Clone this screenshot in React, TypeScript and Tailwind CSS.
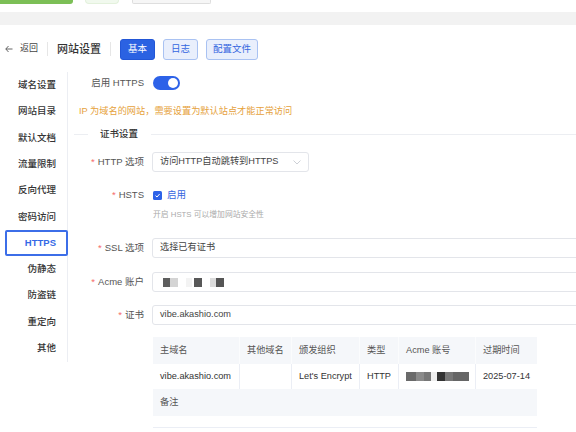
const navItems = [
  "域名设置",
  "网站目录",
  "默认文档",
  "流量限制",
  "反向代理",
  "密码访问",
  "HTTPS",
  "伪静态",
  "防盗链",
  "重定向",
  "其他",
];

const columns = [
  { title: "主域名", width: "w-[86px]" },
  { title: "其他域名", width: "w-[52px]" },
  { title: "颁发组织", width: "w-[68px]" },
  { title: "类型", width: "w-[39px]" },
  { title: "Acme 账号", width: "w-[77px]" },
  { title: "过期时间", width: "w-[62px]" },
];

const Label = ({ text, required }: { text: string; required?: boolean }) => (
  <div className="w-[76px] shrink-0 text-right text-[9.5px] text-[#555]">
    {required && <span className="mr-[3px] text-[#f56c6c]">*</span>}
    {text}
  </div>
);

const Blur = ({ blocks }: { blocks: { w: string; c: string }[] }) => (
  <div className="flex h-[9px]">
    {blocks.map((b, i) => (
      <div key={i} className={`${b.w} ${b.c} h-full`} />
    ))}
  </div>
);

const Sidebar = () => (
  <div className="h-[290px] w-[68px] shrink-0 border-r border-[#eceef3]">
    {navItems.map((item) => {
      const active = item === "HTTPS";
      return (
        <div
          key={item}
          className={
            active
              ? "ml-[5px] flex h-[26.3px] w-[63px] items-center justify-end rounded-[2px] border-2 border-[#3c6ee8] pr-[10px] text-[9.5px] font-bold text-[#3468e6]"
              : "ml-[5px] flex h-[26.3px] w-[63px] items-center justify-end pr-[12px] text-[9.5px] font-medium text-[#333]"
          }
        >
          {item}
        </div>
      );
    })}
  </div>
);

const CertTable = () => (
  <div className="ml-[85px] mt-[12px] w-[384px] border-b border-[#ebeef5] text-[9.2px]">
    <div className="flex h-[27px] bg-[#f5f7fa] text-[#555]">
      {columns.map((c, i) => (
        <div
          key={c.title}
          className={`${c.width} flex items-center px-[7px] ${i > 0 ? "border-l border-[#fbfcfd]" : ""}`}
        >
          {c.title}
        </div>
      ))}
    </div>
    <div className="flex h-[25px] text-[#333]">
      <div className="flex w-[86px] items-center px-[7px]">vibe.akashio.com</div>
      <div className="w-[52px] border-l border-[#ebeef5]" />
      <div className="flex w-[68px] items-center border-l border-[#ebeef5] px-[7px]">Let's Encrypt</div>
      <div className="flex w-[39px] items-center border-l border-[#ebeef5] px-[7px]">HTTP</div>
      <div className="flex w-[77px] items-center border-l border-[#ebeef5] px-[7px]">
        <Blur
          blocks={[
            { w: "w-[10px]", c: "bg-[#6a6a6a]" },
            { w: "w-[8px]", c: "bg-[#8a8a8a]" },
            { w: "w-[7px]", c: "bg-[#777]" },
            { w: "w-[6px]", c: "bg-[#eeeeee]" },
            { w: "w-[8px]", c: "bg-[#333]" },
            { w: "w-[8px]", c: "bg-[#777]" },
            { w: "w-[16px]", c: "bg-[#666]" },
          ]}
        />
      </div>
      <div className="flex w-[62px] items-center border-l border-[#ebeef5] px-[7px]">2025-07-14</div>
    </div>
    <div className="flex h-[27px] items-center bg-[#f5f7fa] px-[7px] text-[#555]">备注</div>
    <div className="h-[11px]" />
  </div>
);

const App = () => {
  return (
    <div
      className="h-[432px] w-[576px] overflow-hidden bg-white"
      style={{ fontFamily: '"Liberation Sans", "Noto Sans CJK SC", sans-serif' }}
    >
      {/* tail of the block above */}
      <div className="flex h-[4px]">
        <div className="w-[73px] rounded-br-[3px] bg-[#7cbf56]" />
        <div className="ml-[12px] w-[34px] rounded-b-[8px] border border-t-0 border-[#e3f1dc] bg-[#f1f9ee]" />
        <div className="ml-[13px] w-[79px] rounded-b-[2px] border border-t-0 border-[#dedede] bg-[#f6f6f6]" />
      </div>
      <div className="mt-[8px] h-[13px] bg-[#f2f2f2]" />

      {/* header */}
      <div className="mt-[13px] flex h-[22px] items-center pl-[5px]">
        <svg width="8" height="8" viewBox="0 0 8 8" fill="none">
          <path d="M0.8 4H7.5M3.5 1L0.8 4L3.5 7" stroke="#555" strokeWidth="0.9" />
        </svg>
        <span className="ml-[7px] text-[9px] text-[#444]">返回</span>
        <div className="ml-[9px] h-[14px] w-px bg-[#e6e6e6]" />
        <span className="ml-[9px] text-[11px] font-medium text-[#333]">网站设置</span>
        <div className="ml-[9px] h-[14px] w-px bg-[#e6e6e6]" />
        <button className="ml-[9px] flex h-[21px] w-[35px] items-center justify-center rounded-[3px] border border-[#2256d6] bg-[#2b62e2] text-[9.5px] text-white">
          基本
        </button>
        <button className="ml-[8px] flex h-[21px] w-[35px] items-center justify-center rounded-[3px] border border-[#a9c2f2] bg-[#e9effc] text-[9.5px] text-[#3466e0]">
          日志
        </button>
        <button className="ml-[8px] flex h-[21px] w-[52px] items-center justify-center rounded-[3px] border border-[#a9c2f2] bg-[#e9effc] text-[9.5px] text-[#3466e0]">
          配置文件
        </button>
      </div>

      {/* body */}
      <div className="mt-[12px] flex">
        <Sidebar />
        <div className="flex flex-1 flex-col">
          <div className="flex h-[22px] items-center">
            <Label text="启用 HTTPS" />
            <div className="ml-[9px] flex h-[14px] w-[27px] items-center justify-end rounded-full bg-[#2d62e8] pr-[2px]">
              <div className="h-[10px] w-[10px] rounded-full bg-white" />
            </div>
          </div>

          <div className="ml-[11px] mt-[9px] flex h-[17px] items-center text-[9.2px] text-[#e6a23c]">
            IP 为域名的网站，需要设置为默认站点才能正常访问
          </div>

          <div className="mt-[7px] flex h-[14px] items-center pl-[6px]">
            <div className="h-px w-[14px] bg-[#eceef2]" />
            <span className="ml-[12px] text-[9.5px] font-medium text-[#333]">证书设置</span>
            <div className="ml-[13px] h-px flex-1 bg-[#eceef2]" />
          </div>

          <div className="mt-[11px] flex h-[20px] items-center">
            <Label text="HTTP 选项" required />
            <div className="ml-[8px] flex h-[20px] w-[157px] items-center justify-between rounded-[3px] border border-[#e3e5ea] pl-[7px] pr-[7px] text-[9.2px] text-[#444]">
              <span>访问HTTP自动跳转到HTTPS</span>
              <svg width="8" height="5" viewBox="0 0 8 5" fill="none">
                <path d="M0.5 0.5L4 4L7.5 0.5" stroke="#c0c4cc" strokeWidth="0.8" />
              </svg>
            </div>
          </div>

          <div className="mt-[16px] flex h-[14px] items-center">
            <Label text="HSTS" required />
            <div className="ml-[9px] flex h-[9px] w-[9px] items-center justify-center rounded-[1.5px] bg-[#2d62e8]">
              <svg width="7" height="7" viewBox="0 0 7 7" fill="none">
                <path d="M1.5 3.6L3 5L5.6 2" stroke="white" strokeWidth="1" />
              </svg>
            </div>
            <span className="ml-[5px] text-[9.5px] text-[#3466e0]">启用</span>
          </div>

          <div className="ml-[85px] mt-[7px] flex h-[12px] items-center text-[7.8px] text-[#aaa]">
            开启 HSTS 可以增加网站安全性
          </div>

          <div className="mt-[17px] flex h-[20px] items-center">
            <Label text="SSL 选项" required />
            <div className="ml-[8px] flex h-[20px] w-[440px] shrink-0 items-center rounded-[3px] border border-[#e3e5ea] pl-[7px] text-[9.2px] text-[#444]">
              选择已有证书
            </div>
          </div>

          <div className="mt-[14px] flex h-[20px] items-center">
            <Label text="Acme 账户" required />
            <div className="ml-[8px] flex h-[20px] w-[440px] shrink-0 items-center rounded-[3px] border border-[#e3e5ea] pl-[10px]">
              <Blur
                blocks={[
                  { w: "w-[7px]", c: "bg-[#5e5e5e]" },
                  { w: "w-[8px]", c: "bg-[#d4d4d4]" },
                  { w: "w-[8px]", c: "bg-white" },
                  { w: "w-[6px]", c: "bg-[#f3f3f3]" },
                  { w: "w-[2px]", c: "bg-white" },
                  { w: "w-[8px]", c: "bg-[#585858]" },
                  { w: "w-[8px]", c: "bg-white" },
                  { w: "w-[6px]", c: "bg-[#dcdcdc]" },
                  { w: "w-[8px]", c: "bg-[#555]" },
                ]}
              />
            </div>
          </div>

          <div className="mt-[13px] flex h-[20px] items-center">
            <Label text="证书" required />
            <div className="ml-[8px] flex h-[20px] w-[440px] shrink-0 items-center rounded-[3px] border border-[#e3e5ea] pl-[7px] text-[9.2px] text-[#444]">
              vibe.akashio.com
            </div>
          </div>

          <CertTable />
        </div>
      </div>
    </div>
  );
};

export default App;
